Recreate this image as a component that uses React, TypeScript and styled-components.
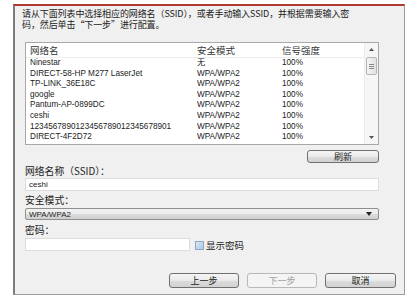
import styled, { createGlobalStyle } from "styled-components";

const GlobalStyle = createGlobalStyle`
  html, body {
    margin: 0;
    padding: 0;
    background: #ffffff;
  }
  body {
    font-family: "Liberation Sans", "Noto Sans CJK SC", sans-serif;
    color: #222;
  }
`;

const networks = [
  { name: "Ninestar", mode: "无", signal: "100%" },
  { name: "DIRECT-58-HP M277 LaserJet", mode: "WPA/WPA2", signal: "100%" },
  { name: "TP-LINK_36E18C", mode: "WPA/WPA2", signal: "100%" },
  { name: "google", mode: "WPA/WPA2", signal: "100%" },
  { name: "Pantum-AP-0899DC", mode: "WPA/WPA2", signal: "100%" },
  { name: "ceshi", mode: "WPA/WPA2", signal: "100%" },
  { name: "1234567890123456789012345678901", mode: "WPA/WPA2", signal: "100%" },
  { name: "DIRECT-4F2D72", mode: "WPA/WPA2", signal: "100%" },
];

function App() {
  return (
    <>
      <GlobalStyle />
      <Dialog>
        <Intro>
          <IntroLine>请从下面列表中选择相应的网络名（SSID），或者手动输入SSID，并根据需要输入密</IntroLine>
          <IntroLine>码，然后单击“下一步”进行配置。</IntroLine>
        </Intro>
        <ListBox>
          <Table>
            <HeaderRow>
              <Cell>网络名</Cell>
              <Cell>安全模式</Cell>
              <Cell>信号强度</Cell>
            </HeaderRow>
            <Rows>
              {networks.map((n) => (
                <Row key={n.name}>
                  <Cell>{n.name}</Cell>
                  <Cell>{n.mode}</Cell>
                  <Cell>{n.signal}</Cell>
                </Row>
              ))}
            </Rows>
          </Table>
          <ScrollBar>
            <Arrow>
              <svg width="5" height="3" viewBox="0 0 5 3">
                <path d="M0 3 L2.5 0 L5 3 Z" fill="#555" />
              </svg>
            </Arrow>
            <Track>
              <Thumb>
                <Grip />
                <Grip />
                <Grip />
              </Thumb>
            </Track>
            <Arrow>
              <svg width="5" height="3" viewBox="0 0 5 3">
                <path d="M0 0 L2.5 3 L5 0 Z" fill="#555" />
              </svg>
            </Arrow>
          </ScrollBar>
        </ListBox>
        <RefreshRow>
          <Button $width={72} $height={13}>
            刷新
          </Button>
        </RefreshRow>
        <Label $top={3}>网络名称（SSID）：</Label>
        <TextField>ceshi</TextField>
        <Label $top={4}>安全模式：</Label>
        <Select>
          <span>WPA/WPA2</span>
          <svg width="6" height="4" viewBox="0 0 6 4">
            <path d="M0 0 L6 0 L3 4 Z" fill="#222" />
          </svg>
        </Select>
        <Label $top={5}>密码：</Label>
        <PasswordRow>
          <PasswordField />
          <CheckLabel>
            <CheckBox />
            显示密码
          </CheckLabel>
        </PasswordRow>
        <Footer>
          <Button $width={70} $height={15}>
            上一步
          </Button>
          <Button $width={70} $height={15} $disabled>
            下一步
          </Button>
          <Button $width={71} $height={15}>
            取消
          </Button>
        </Footer>
      </Dialog>
    </>
  );
}

const Dialog = styled.div`
  margin: 4px 0 0 13px;
  width: 392px;
  height: 291px;
  box-sizing: border-box;
  background: #f0f0f0;
  border: 1px solid #9a9a9a;
  border-left: 2px solid #7d7d7d;
  border-top: 2px solid #b0392f;
  padding: 0 8px 0 10px;
  display: flex;
  flex-direction: column;
`;

const Intro = styled.div`
  margin: 2px 0 0 -3px;
  display: flex;
  flex-direction: column;
`;

const IntroLine = styled.div`
  font-family: "Noto Sans CJK SC", sans-serif;
  font-size: 9px;
  line-height: 11px;
  height: 11px;
  color: #1a1a1a;
  white-space: nowrap;
  letter-spacing: -0.1px;
`;

const ListBox = styled.div`
  margin-top: 12px;
  width: 354px;
  height: 103px;
  box-sizing: border-box;
  background: #fff;
  border: 1px solid #a8a8a8;
  display: flex;
  overflow: hidden;
`;

const Table = styled.div`
  flex: 1;
  display: flex;
  flex-direction: column;
  overflow: hidden;
`;

const HeaderRow = styled.div`
  display: grid;
  grid-template-columns: 167px 85px 1fr;
  height: 14px;
  align-items: center;
  padding-left: 4px;
  font-family: "Noto Sans CJK SC", sans-serif;
  font-size: 9.5px;
  color: #333;
  border-bottom: 1px solid #eee;
`;

const Rows = styled.div`
  display: flex;
  flex-direction: column;
`;

const Row = styled.div`
  display: grid;
  grid-template-columns: 167px 85px 1fr;
  height: 10.6px;
  line-height: 10.6px;
  padding-left: 4px;
  font-size: 8.2px;
  color: #222;
`;

const Cell = styled.span`
  white-space: nowrap;
  overflow: hidden;
  font-family: "Liberation Sans", "Noto Sans CJK SC", sans-serif;
`;

const ScrollBar = styled.div`
  width: 13px;
  display: flex;
  flex-direction: column;
  background: #f6f6f6;
  border-left: 1px solid #ececec;
`;

const Arrow = styled.div`
  height: 13px;
  display: flex;
  align-items: center;
  justify-content: center;
`;

const Track = styled.div`
  flex: 1;
  padding-top: 1px;
`;

const Thumb = styled.div`
  margin: 0 1px;
  height: 18px;
  box-sizing: border-box;
  border: 1px solid #b5b5b5;
  border-radius: 2px;
  background: linear-gradient(to right, #f4f4f4, #e2e2e2);
  display: flex;
  flex-direction: column;
  align-items: center;
  justify-content: center;
  gap: 1px;
`;

const Grip = styled.div`
  width: 5px;
  height: 1px;
  background: #8a8a8a;
`;

const RefreshRow = styled.div`
  display: flex;
  justify-content: flex-end;
  width: 354px;
  margin-top: 5px;
`;

const Button = styled.div<{ $width: number; $height: number; $disabled?: boolean }>`
  width: ${(p) => p.$width}px;
  height: ${(p) => p.$height}px;
  box-sizing: border-box;
  border: 1px solid ${(p) => (p.$disabled ? "#b8b8b8" : "#707070")};
  border-radius: 3px;
  background: ${(p) =>
    p.$disabled
      ? "#f4f4f4"
      : "linear-gradient(to bottom, #f5f5f5 0%, #eaeaea 50%, #dcdcdc 51%, #d2d2d2 100%)"};
  display: flex;
  align-items: center;
  justify-content: center;
  font-family: "Noto Sans CJK SC", sans-serif;
  font-size: 9px;
  color: ${(p) => (p.$disabled ? "#a0a0a0" : "#222")};
`;

const Label = styled.div<{ $top: number }>`
  margin-top: ${(p) => p.$top}px;
  font-family: "Noto Sans CJK SC", sans-serif;
  font-size: 9.8px;
  line-height: 11px;
  color: #222;
`;

const TextField = styled.div`
  margin-top: 1px;
  width: 354px;
  height: 13px;
  box-sizing: border-box;
  background: #fff;
  border: 1px solid #dcdcdc;
  padding-left: 3px;
  display: flex;
  align-items: center;
  font-size: 8px;
  color: #222;
`;

const Select = styled.div`
  margin-top: 2px;
  width: 354px;
  height: 12px;
  box-sizing: border-box;
  border: 1px solid #8e8f8f;
  border-radius: 2px;
  background: linear-gradient(to bottom, #f2f2f2 0%, #ebebeb 50%, #dddddd 51%, #cfcfcf 100%);
  padding: 0 6px 0 3px;
  display: flex;
  align-items: center;
  justify-content: space-between;
  font-size: 8px;
  color: #222;
`;

const PasswordRow = styled.div`
  display: flex;
  align-items: center;
  gap: 5px;
`;

const PasswordField = styled.div`
  width: 165px;
  height: 13px;
  box-sizing: border-box;
  background: #fff;
  border: 1px solid #dcdcdc;
`;

const CheckLabel = styled.div`
  display: flex;
  align-items: center;
  gap: 2px;
  margin-top: 2px;
  font-family: "Noto Sans CJK SC", sans-serif;
  font-size: 9.5px;
  color: #222;
`;

const CheckBox = styled.div`
  width: 9px;
  height: 9px;
  box-sizing: border-box;
  border: 1px solid #8fa9c4;
  background: linear-gradient(135deg, #dbe9f7, #a9c8e8);
`;

const Footer = styled.div`
  margin-top: 21px;
  display: flex;
  justify-content: flex-end;
  gap: 8px;
`;

export default App;
